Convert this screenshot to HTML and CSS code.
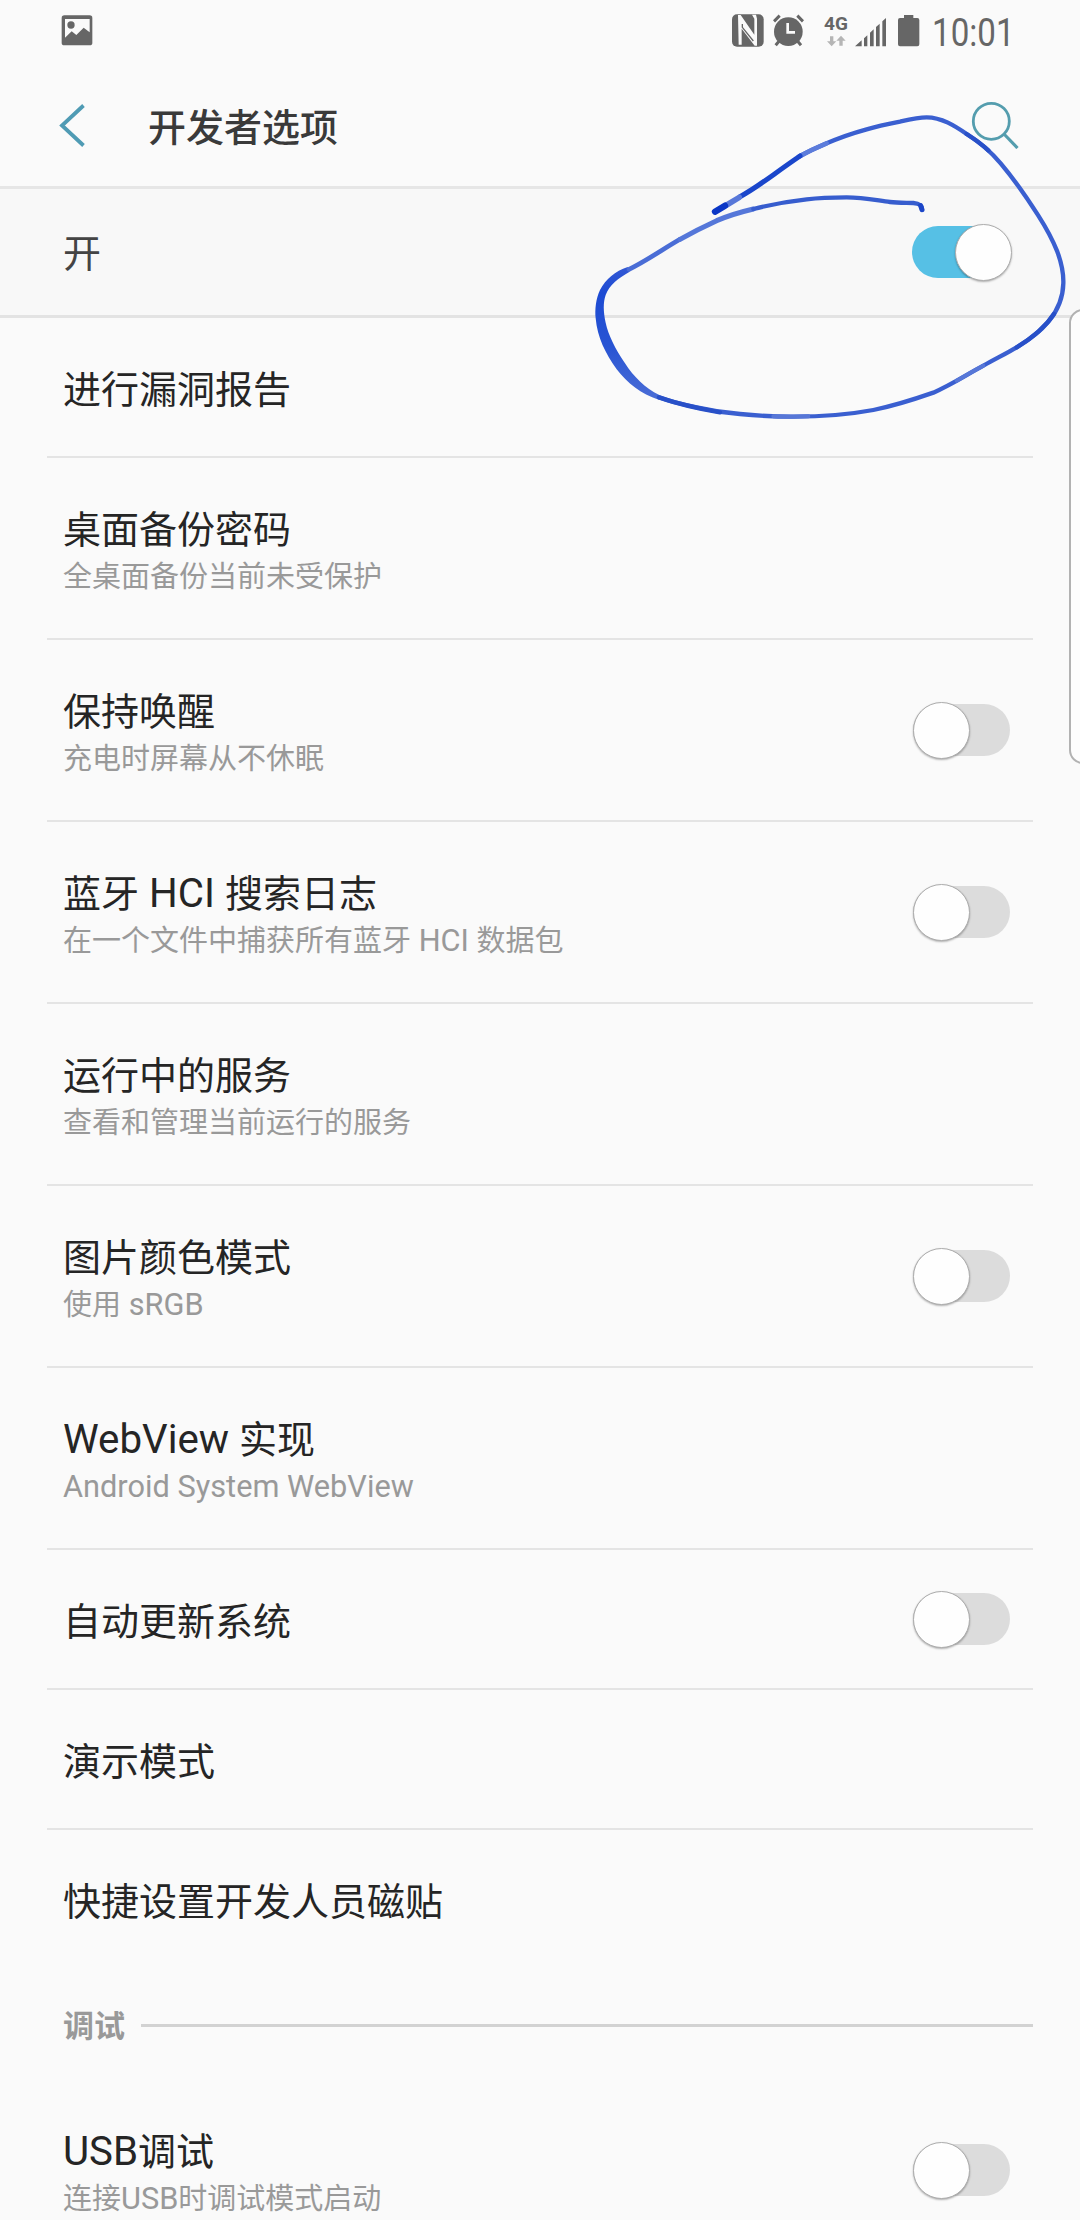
FILE: index.html
```html
<!DOCTYPE html>
<html lang="zh-CN">
<head>
    <meta charset="UTF-8">
    <title>开发者选项</title>
    <link rel="stylesheet" href="styles.css">
</head>
<body>
    <div class="screen">
        <div class="status-bar">
            <svg class="icon-picture" width="32" height="32" viewBox="0 0 96 96">
                <rect x="2" y="1" width="92" height="90" rx="8" fill="#666"/>
                <path d="M12 12H86V52L68 38L46 60L32 49L12 68Z" fill="#fafafa"/>
                <circle cx="30" cy="30" r="11" fill="#666"/>
            </svg>
            <div class="status-right">
                <svg class="icon-nfc" width="32" height="33" viewBox="0 0 96 99">
                    <rect y="1" width="95" height="97" rx="15" fill="#666"/>
                    <path fill="#fafafa" d="M18 3L26 3L67 62V14L60 2H72L75 14V95H68L29 44V92H20Z"/>
                    <path fill="none" stroke="#666" stroke-width="4" d="M31 30V40L64 81"/>
                </svg>
                <svg class="icon-alarm" width="31" height="33" viewBox="0 0 93 99">
                    <circle cx="46" cy="53" r="43" fill="#666"/>
                    <path fill="none" stroke="#666" stroke-width="9" d="M3 22L20 5M90 22L73 5M18 82L8 94M74 82L84 94"/>
                    <path fill="none" stroke="#fafafa" stroke-width="8" d="M44 27V55H66"/>
                </svg>
                <div class="network">
                    <span class="network-type">4G</span>
                    <svg width="20" height="12" viewBox="0 0 60 36">
                        <path fill="#b5b5b5" d="M12 4H22V19H31L17 34L3 19H12ZM40 32H50V17H59L45 2L31 17H40Z"/>
                    </svg>
                </div>
                <svg class="icon-signal" width="32" height="29" viewBox="0 0 96 87">
                    <path fill="#666" d="M0 85L20 67V85ZM27 61L37 52V85H27ZM45 44L56 34V85H45ZM63 27L74 17V85H63ZM82 10L93 0V85H82Z"/>
                </svg>
                <svg class="icon-battery" width="22" height="32" viewBox="0 0 66 96">
                    <path fill="#666" d="M18 0H46V9H58Q64 9 64 15V88Q64 94 58 94H6Q0 94 0 88V15Q0 9 6 9H18Z"/>
                </svg>
                <span class="clock">10:01</span>
            </div>
        </div>

        <div class="header">
            <svg class="icon-back" width="28" height="44" viewBox="0 0 28 44">
                <path fill="none" stroke="#4f9bb4" stroke-width="3.8" d="M25.5 2.5L4 22.5L25.5 42.5"/>
            </svg>
            <h1>开发者选项</h1>
            <svg class="icon-search" width="48" height="48" viewBox="0 0 48 48">
                <circle cx="20.3" cy="20.3" r="18" fill="none" stroke="#549dae" stroke-width="2.8"/>
                <path stroke="#549dae" stroke-width="3.2" d="M32.5 32.5L46.5 47"/>
            </svg>
        </div>

        <div class="master">
            <span class="master-label">开</span>
            <div class="switch on"></div>
        </div>

        <div class="list">
            <div class="row single">
                <div class="text"><p class="title">进行漏洞报告</p></div>
            </div>
            <div class="row">
                <div class="text">
                    <p class="title">桌面备份密码</p>
                    <p class="summary">全桌面备份当前未受保护</p>
                </div>
            </div>
            <div class="row">
                <div class="text">
                    <p class="title">保持唤醒</p>
                    <p class="summary">充电时屏幕从不休眠</p>
                </div>
                <div class="switch"></div>
            </div>
            <div class="row">
                <div class="text">
                    <p class="title">蓝牙<span class="latin"> HCI </span>搜索日志</p>
                    <p class="summary">在一个文件中捕获所有蓝牙<span class="latin"> HCI </span>数据包</p>
                </div>
                <div class="switch"></div>
            </div>
            <div class="row">
                <div class="text">
                    <p class="title">运行中的服务</p>
                    <p class="summary">查看和管理当前运行的服务</p>
                </div>
            </div>
            <div class="row">
                <div class="text">
                    <p class="title">图片颜色模式</p>
                    <p class="summary">使用<span class="latin"> sRGB</span></p>
                </div>
                <div class="switch"></div>
            </div>
            <div class="row">
                <div class="text">
                    <p class="title"><span class="latin">WebView </span>实现</p>
                    <p class="summary"><span class="latin">Android System WebView</span></p>
                </div>
            </div>
            <div class="row single">
                <div class="text"><p class="title">自动更新系统</p></div>
                <div class="switch"></div>
            </div>
            <div class="row single">
                <div class="text"><p class="title">演示模式</p></div>
            </div>
            <div class="row single last">
                <div class="text"><p class="title">快捷设置开发人员磁贴</p></div>
            </div>
            <div class="category"><span>调试</span></div>
            <div class="row last">
                <div class="text">
                    <p class="title"><span class="latin">USB</span>调试</p>
                    <p class="summary">连接<span class="latin">USB</span>时调试模式启动</p>
                </div>
                <div class="switch"></div>
            </div>
        </div>

        <div class="edge-handle"></div>

        <!-- pen stroke around the main switch -->
        <svg class="scribble" width="500" height="360" viewBox="0 0 1500 1080">
            <defs>
                <linearGradient id="ink" x1="0" y1="0" x2="0" y2="1">
                    <stop offset="0" stop-color="#3358d4"/>
                    <stop offset="0.2" stop-color="#1d4bd3"/>
                    <stop offset="0.6" stop-color="#2854d3"/>
                    <stop offset="1" stop-color="#4a6dd6"/>
                </linearGradient>
            </defs>
            <path fill="url(#ink)" d="M143 561C105 574 78 597 60 630C48 654 44 690 47 715C52 772 76 820 110 868C142 910 183 942 236 959L238 945C195 925 161 890 135 850C105 805 85 765 77 728C70 695 69 668 77 645C88 615 115 594 149 575Z"/>
            <g fill="none" stroke-linecap="round" stroke-linejoin="round">
                <path stroke="#3a5fd0" stroke-width="13" d="M660 228C690 212 715 201 740 190C785 170 820 159 860 148C895 138 930 131 960 125C990 118 1015 112 1040 112C1085 112 1125 138 1160 162C1205 190 1235 218 1262 250C1300 295 1340 352 1375 407C1400 446 1418 480 1432 515C1445 550 1451 578 1450 610C1449 655 1434 690 1406 724C1378 758 1340 784 1310 802C1280 820 1245 837 1210 857C1160 884 1115 914 1060 938C1000 959 940 978 880 990C800 1005 720 1010 640 1010C580 1010 530 1007 480 1002C430 998 390 991 350 982C310 974 270 965 237 952"/>
                <path stroke="#4a6dd6" stroke-width="14" d="M147 568C195 545 248 508 300 478"/>
                <path stroke="#5577d9" stroke-width="15" d="M300 478C335 458 375 438 410 422C445 407 482 396 520 387"/>
                <path stroke="#375dce" stroke-width="13" d="M520 387C570 374 625 364 680 358C720 353 760 352 800 352C850 352 890 361 930 366C955 369 985 368 1000 369C1018 371 1027 375 1026 389"/>
                <path stroke="#1c46c8" stroke-width="15" d="M1022 377L1026 389"/>
                <path stroke="#5c7cdb" stroke-width="14" d="M655 231Q695 208 740 190"/>
                <path stroke="#1a46cb" stroke-width="15" d="M480 350C530 324 575 286 660 228"/>
                <path stroke="#5878d9" stroke-width="17" d="M440 375L478 352"/>
                <path stroke="#0a36c6" stroke-width="19" d="M405 395L435 377"/>
                <path stroke="#5777d7" stroke-width="12" d="M580 1009Q630 1011 685 1009M1130 902Q1170 878 1210 857"/>
                <path stroke="#2850c8" stroke-width="13" d="M237 952Q315 979 420 997M1310 802Q1385 757 1422 702M1160 162Q1200 188 1225 211"/>
            </g>
        </svg>
    </div>
</body>
</html>
```

FILE: styles.css
```css
* {
    box-sizing: border-box;
}
body {
    margin: 0;
    background-color: #fafafa;
    font-family: Roboto, "Noto Sans CJK SC", sans-serif;
    color: #252525;
}
.screen {
    position: relative;
    width: 1080px;
    height: 2220px;
    overflow: hidden;
}
svg {
    display: block;
    flex: none;
}
h1, p {
    margin: 0;
}

/* status bar */
.status-bar {
    display: flex;
    justify-content: space-between;
    height: 64px;
    padding: 14px 66px 0 61px;
    color: #666;
}
.status-right {
    display: flex;
    align-items: flex-start;
}
.icon-picture {
    margin-top: 1px;
}
.icon-alarm {
    margin-left: 9px;
}
.network {
    width: 28px;
    margin-left: 20px;
}
.network-type {
    display: block;
    height: 21px;
    font-size: 19px;
    font-weight: 700;
    line-height: 19px;
}
.network svg {
    margin-left: 2px;
}
.icon-signal {
    margin: 4px 0 0 3px;
}
.icon-battery {
    margin: 1px 0 0 11px;
}
.clock {
    width: 82px;
    margin-left: 12px;
    font-size: 39px;
    line-height: 39px;
    white-space: nowrap;
    transform: scaleX(0.85);
    transform-origin: left;
}

/* title bar */
.header {
    display: flex;
    align-items: center;
    height: 125px;
    padding: 0 61px 0 58px;
    border-bottom: 3px solid #e6e6e6;
}
.header h1 {
    flex: 1;
    margin-left: 62px;
    padding-top: 5px;
    font-size: 38px;
    font-weight: 500;
    line-height: 56px;
    color: #3a3a3a;
}
.icon-search {
    margin-bottom: 1px;
}

.master {
    display: flex;
    align-items: center;
    justify-content: space-between;
    height: 129px;
    padding: 0 70px 0 63px;
    border-bottom: 3px solid #e3e3e3;
    background-color: #f8f8f8;
    font-size: 38px;
    color: #444;
}
.master-label {
    padding-bottom: 3px;
}

/* preference list */
.list {
    padding: 0 47px;
}
.row {
    display: flex;
    align-items: center;
    justify-content: space-between;
    height: 182px;
    padding: 0 23px 0 16px;
    border-bottom: 2px solid #e4e4e4;
}
.row.single {
    height: 140px;
}
.row.last {
    border-bottom-color: transparent;
}
.text {
    padding-top: 5px;
}
.title {
    font-size: 38px;
    line-height: 52px;
}
.summary {
    font-size: 29px;
    line-height: 42px;
    color: #999;
}
/* roboto runs a bit smaller than the chinese glyphs */
.latin {
    font-size: 1.06em;
    line-height: 1;
}
.category {
    display: flex;
    align-items: center;
    height: 110px;
    padding-left: 16px;
    font-size: 31px;
    font-weight: 700;
    color: #999;
}
.category span {
    padding-bottom: 3px;
}
.category::after {
    content: "";
    flex: 1;
    height: 3px;
    margin-left: 16px;
    background-color: #d2d2d2;
}

/* switches */
.switch {
    position: relative;
    flex: none;
    width: 97px;
    height: 52px;
    border-radius: 26px;
    background-color: #dcdcdc;
}
.switch::after {
    content: "";
    position: absolute;
    top: -2px;
    left: 0;
    width: 55px;
    height: 55px;
    border: 1px solid #adadad;
    border-radius: 50%;
    background-color: #fefefe;
    box-shadow: 0 1px 2px rgba(0,0,0,0.3);
}
.switch.on {
    width: 98px;
    background-color: #56c0e5;
}
.switch.on::after {
    left: 43px;
}

.edge-handle {
    position: absolute;
    top: 309px;
    right: -20px;
    width: 31px;
    height: 455px;
    border: 2px solid #b2b2b2;
    border-radius: 14px;
    background-color: #fdfdfd;
}
.scribble {
    position: absolute;
    top: 80px;
    left: 580px;
}
```
